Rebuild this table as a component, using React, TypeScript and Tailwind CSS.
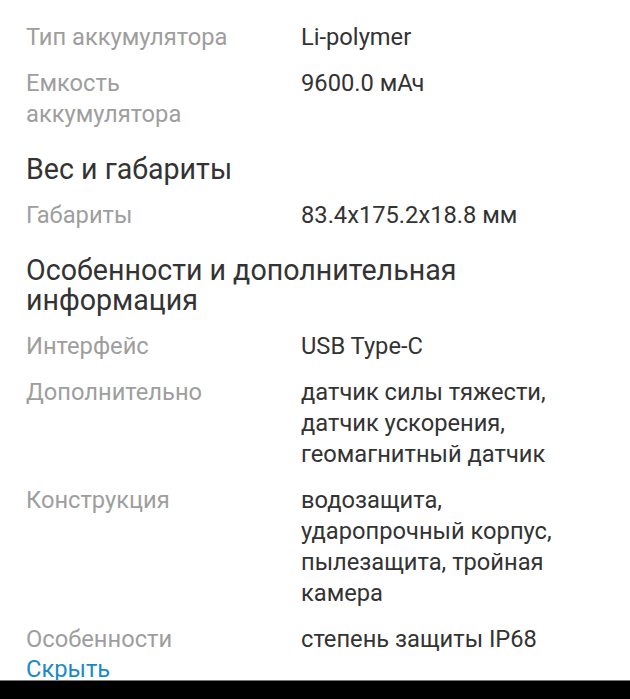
const sections: { title?: string; rows: { label: string; value: string }[] }[] = [
  {
    rows: [
      { label: 'Тип аккумулятора', value: 'Li-polymer' },
      { label: 'Емкость аккумулятора', value: '9600.0 мАч' },
    ],
  },
  {
    title: 'Вес и габариты',
    rows: [{ label: 'Габариты', value: '83.4x175.2x18.8 мм' }],
  },
  {
    title: 'Особенности и дополнительная информация',
    rows: [
      { label: 'Интерфейс', value: 'USB Type-C' },
      { label: 'Дополнительно', value: 'датчик силы тяжести, датчик ускорения, геомагнитный датчик' },
      { label: 'Конструкция', value: 'водозащита, ударопрочный корпус, пылезащита, тройная камера' },
      { label: 'Особенности', value: 'степень защиты IP68' },
    ],
  },
];

export default function App() {
  return (
    <main className="min-h-[699px] bg-white font-['Roboto',sans-serif] px-[26px] pt-[22px]">
      {sections.map((s, i) => (
        <section key={i}>
          {s.title && (
            <h2 className="text-[28.6px] leading-[30px] text-[#333] pr-[40px] mt-[24px] mb-[16px]">{s.title}</h2>
          )}
          <div className="flex flex-col gap-[15px]">
            {s.rows.map((r) => (
              <div key={r.label} className="grid grid-cols-[275px_1fr] text-[23.7px] leading-[31px]">
                <div className="text-[#9e9e9e] pr-[30px]">{r.label}</div>
                <div className="text-[#333]">{r.value}</div>
              </div>
            ))}
          </div>
        </section>
      ))}
      <button className="block text-[23.7px] leading-[29px] text-[#1a8ac6]">Скрыть</button>
      <div className="fixed bottom-0 left-0 right-0 h-[19px] bg-black border-t border-[#777]" />
    </main>
  );
}
